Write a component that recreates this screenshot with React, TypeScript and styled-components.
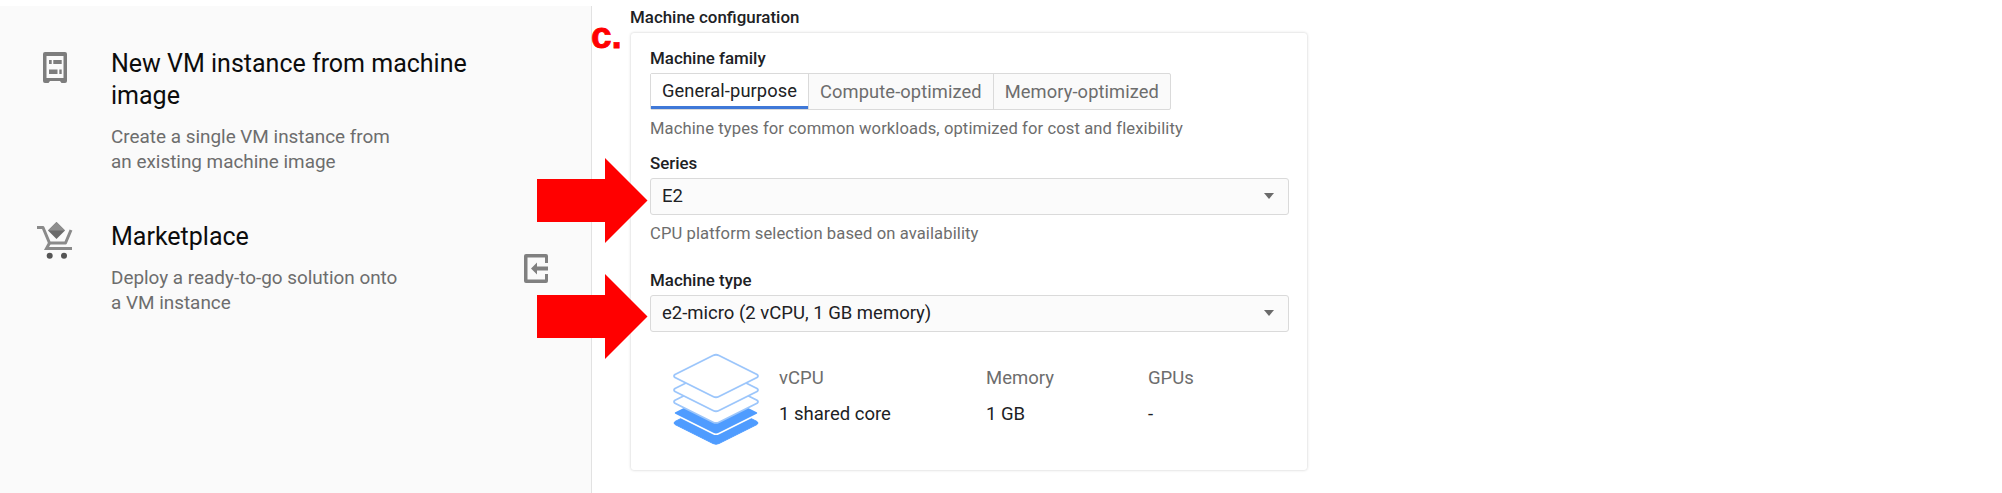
import React from "react";
import styled, { createGlobalStyle } from "styled-components";

const Global = createGlobalStyle`
  html, body { margin: 0; padding: 0; background: #fff; overflow: hidden; }
  body { font-family: Roboto, "Liberation Sans", sans-serif; }
`;

const Page = styled.div`
  position: relative;
  width: 2002px;
  height: 493px;
  padding-top: 6px;
  box-sizing: border-box;
  display: flex;
  overflow: hidden;
`;

const Sidebar = styled.aside`
  position: relative;
  width: 592px;
  height: 487px;
  box-sizing: border-box;
  flex: none;
  background: #fafafa;
  border-right: 1px solid #e2e2e2;
  padding-top: 42px;
  display: flex;
  flex-direction: column;
  gap: 47px;
`;

const Option = styled.div`
  display: flex;
`;

const OptionIcon = styled.div<{ $top: number }>`
  width: 111px;
  flex: none;
  display: flex;
  justify-content: center;
  align-items: flex-start;
  padding: ${(p) => p.$top}px 1px 0 0;
  box-sizing: border-box;
`;

const OptionTitle = styled.div`
  font-size: 25px;
  line-height: 32px;
  color: #0c0c0c;
  margin-bottom: 12px;
  width: 380px;
`;

const OptionDesc = styled.div`
  font-size: 18.9px;
  line-height: 25px;
  color: #6d6d6d;
`;

const Collapse = styled.svg`
  position: absolute;
  left: 524px;
  top: 248px;
`;

const Main = styled.main`
  flex: none;
  padding-left: 38px;
  width: 700px;
  box-sizing: border-box;
`;

const SectionTitle = styled.div`
  font-size: 16.9px;
  line-height: 22px;
  font-weight: 500;
  color: #202124;
  margin-bottom: 5px;
`;

const Card = styled.section`
  width: 676px;
  height: 437px;
  box-sizing: border-box;
  margin-left: 1px;
  padding: 13px 18px 0 19px;
  background: #fff;
  border-radius: 3px;
  box-shadow: 0 0 3px rgba(0, 0, 0, 0.22);
`;

const Label = styled.div`
  font-size: 16.9px;
  line-height: 24px;
  font-weight: 500;
  color: #202124;
`;

const Tabs = styled.div`
  display: flex;
  width: max-content;
  height: 37px;
  margin-top: 3px;
  box-sizing: border-box;
  border: 1px solid #dadada;
  border-radius: 2px;
  background: #fafafa;
`;

const Tab = styled.div<{ $active?: boolean }>`
  height: 100%;
  display: flex;
  align-items: center;
  padding: 0 11px;
  font-size: 18.3px;
  letter-spacing: 0.1px;
  color: ${(p) => (p.$active ? "#202124" : "#6d6d6d")};
  background: ${(p) => (p.$active ? "#fff" : "transparent")};
  border-left: ${(p) => (p.$active ? "none" : "1px solid #dadada")};
  border-bottom: ${(p) => (p.$active ? "3px solid #3f78d8" : "none")};
  box-sizing: border-box;
`;

const Hint = styled.div`
  font-size: 16.6px;
  line-height: 20px;
  color: #6d6d6d;
  margin-top: 9px;
  letter-spacing: 0.1px;
`;

const Field = styled.div<{ $gap: number }>`
  margin-top: ${(p) => p.$gap}px;
`;

const Select = styled.div`
  height: 37px;
  width: 639px;
  margin-top: 3px;
  box-sizing: border-box;
  border: 1px solid #dadada;
  border-radius: 3px;
  background: #fbfbfb;
  display: flex;
  align-items: center;
  justify-content: space-between;
  padding: 0 14px 2px 11px;
  font-size: 18.5px;
  color: #202124;
`;

const Caret = styled.span`
  width: 0;
  height: 0;
  border-left: 5.5px solid transparent;
  border-right: 5.5px solid transparent;
  border-top: 6.5px solid #6b6b6b;
`;

const Specs = styled.div`
  display: flex;
  margin-top: 21px;
  margin-left: 22px;
`;

const SpecFigure = styled.div`
  flex: none;
  width: 107px;
`;

const SpecColumn = styled.div<{ $w: number }>`
  width: ${(p) => p.$w}px;
  padding-top: 13px;
`;

const SpecHead = styled.div`
  font-size: 18.5px;
  line-height: 24px;
  color: #6d6d6d;
`;

const SpecValue = styled.div`
  font-size: 18.5px;
  line-height: 24px;
  color: #202124;
  margin-top: 12px;
`;

const Mark = styled.div`
  position: absolute;
  left: 591px;
  top: 11px;
  font-family: "Liberation Sans", Arial, sans-serif;
  font-weight: 700;
  font-size: 37px;
  line-height: 50px;
  color: #ff0000;
  -webkit-text-stroke: 0.8px #ff0000;
`;

const Arrow = styled.svg<{ $top: number }>`
  position: absolute;
  left: 537px;
  top: ${(p) => p.$top}px;
`;

const RedArrow = ({ top }: { top: number }) => (
  <Arrow $top={top} width="111" height="85" viewBox="0 0 111 85">
    <path d="M0 21H68V0L110.5 42.5L68 85V64H0Z" fill="#ff0000" />
  </Arrow>
);

const ImageIcon = () => (
  <svg width="24" height="31" viewBox="0 0 24 31">
    <path
      fillRule="evenodd"
      fill="#7d7d7d"
      d="M2 0H22A2 2 0 0 1 24 2V29A2 2 0 0 1 22 31H18.5L17 29H7L5.5 31H2A2 2 0 0 1 0 29V2A2 2 0 0 1 2 0ZM3.5 4V26H20.5V4ZM6 8H8.7V12H6ZM10.3 8H18.7V12H10.3ZM6 17.5H14.5V22H6ZM16.3 17.5H18.7V22H16.3Z"
    />
  </svg>
);

const CartIcon = () => (
  <svg width="36" height="38" viewBox="0 0 36 38">
    <path d="M19.5 0L28 8.5L19.5 17L11 8.5Z" fill="#6a6a6a" />
    <path d="M19.5 0L28 8.5H11Z" fill="#8e8e8e" />
    <path
      d="M0 5.5H6L12.5 21H28.5L34 8"
      fill="none"
      stroke="#8a8a8a"
      strokeWidth="3"
      strokeLinejoin="round"
    />
    <path d="M12.5 21L9.5 26.5H35" fill="none" stroke="#8a8a8a" strokeWidth="3" />
    <circle cx="12.7" cy="33.8" r="3" fill="#555" />
    <circle cx="27" cy="33.8" r="3" fill="#555" />
  </svg>
);

const plate = (mid: number) =>
  `M3 ${mid - 1.5}L41 ${mid - 20.5}Q44 ${mid - 22} 47 ${mid - 20.5}L85 ${mid - 1.5}Q87 ${mid} 85 ${mid + 1.5}L47 ${mid + 20.5}Q44 ${mid + 22} 41 ${mid + 20.5}L3 ${mid + 1.5}Q1 ${mid} 3 ${mid - 1.5}Z`;

const StackIcon = () => (
  <svg width="88" height="94" viewBox="0 0 88 94">
    <path d={plate(70)} fill="#4f9cff" stroke="#4f9cff" strokeWidth="1" />
    <path d={plate(60)} fill="#4f9cff" stroke="#fff" strokeWidth="1.5" />
    <path d={plate(48.7)} fill="#fff" stroke="#9cc6fb" strokeWidth="1.8" />
    <path d={plate(37)} fill="#fff" stroke="#9cc6fb" strokeWidth="1.8" />
    <path d={plate(23)} fill="#fff" stroke="#9cc6fb" strokeWidth="1.8" />
  </svg>
);

export default function App() {
  return (
    <>
      <Global />
      <Page>
        <Sidebar>
          <Option>
            <OptionIcon $top={4}>
              <ImageIcon />
            </OptionIcon>
            <div>
              <OptionTitle>New VM instance from machine image</OptionTitle>
              <OptionDesc>
                Create a single VM instance from
                <br />
                an existing machine image
              </OptionDesc>
            </div>
          </Option>
          <Option>
            <OptionIcon $top={1}>
              <CartIcon />
            </OptionIcon>
            <div>
              <OptionTitle>Marketplace</OptionTitle>
              <OptionDesc>
                Deploy a ready-to-go solution onto
                <br />a VM instance
              </OptionDesc>
            </div>
          </Option>
          <Collapse width="24" height="29" viewBox="0 0 24 29">
            <path
              fill="#808080"
              d="M2 0H22A2 2 0 0 1 24 2V9H21V3.5H3.5V25.5H21V20H24V27A2 2 0 0 1 22 29H2A2 2 0 0 1 0 27V2A2 2 0 0 1 2 0Z"
            />
            <path d="M24 12.5H13V8.5L7 14.5L13 20.5V16.5H24Z" fill="#808080" />
          </Collapse>
        </Sidebar>
        <Main>
          <SectionTitle>Machine configuration</SectionTitle>
          <Card>
            <Label>Machine family</Label>
            <Tabs>
              <Tab $active>General-purpose</Tab>
              <Tab>Compute-optimized</Tab>
              <Tab>Memory-optimized</Tab>
            </Tabs>
            <Hint>Machine types for common workloads, optimized for cost and flexibility</Hint>
            <Field $gap={12}>
              <Label>Series</Label>
              <Select>
                E2
                <Caret />
              </Select>
              <Hint>CPU platform selection based on availability</Hint>
            </Field>
            <Field $gap={24}>
              <Label>Machine type</Label>
              <Select>
                e2-micro (2 vCPU, 1 GB memory)
                <Caret />
              </Select>
            </Field>
            <Specs>
              <SpecFigure>
                <StackIcon />
              </SpecFigure>
              <SpecColumn $w={207}>
                <SpecHead>vCPU</SpecHead>
                <SpecValue>1 shared core</SpecValue>
              </SpecColumn>
              <SpecColumn $w={162}>
                <SpecHead>Memory</SpecHead>
                <SpecValue>1 GB</SpecValue>
              </SpecColumn>
              <SpecColumn $w={80}>
                <SpecHead>GPUs</SpecHead>
                <SpecValue>-</SpecValue>
              </SpecColumn>
            </Specs>
          </Card>
        </Main>
        <Mark>c.</Mark>
        <RedArrow top={158} />
        <RedArrow top={274} />
      </Page>
    </>
  );
}
